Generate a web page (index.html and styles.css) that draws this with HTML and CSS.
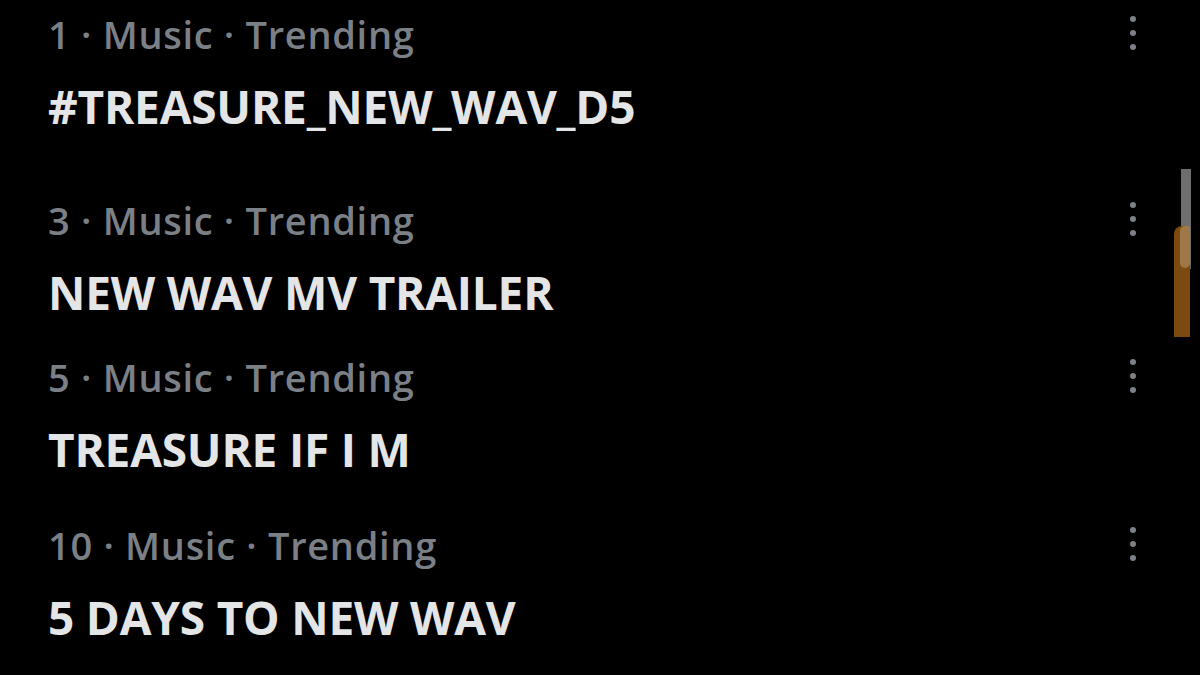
FILE: index.html
```html
<!DOCTYPE html>
<html>
<head>
<meta charset="utf-8">
<link rel="stylesheet" href="styles.css">
</head>
<body>
<div class="page">
  <ul class="trends">
    <li class="trend">
      <div class="trend-main">
        <div class="meta">1 · Music · Trending</div>
        <div class="title">#TREASURE_NEW_WAV_D5</div>
      </div>
      <button class="more" aria-label="More"><svg viewBox="0 0 6 34" width="6" height="34"><circle cx="3" cy="3" r="3"/><circle cx="3" cy="17" r="3"/><circle cx="3" cy="31" r="3"/></svg></button>
    </li>
    <li class="trend">
      <div class="trend-main">
        <div class="meta">3 · Music · Trending</div>
        <div class="title">NEW WAV MV TRAILER</div>
      </div>
      <button class="more" aria-label="More"><svg viewBox="0 0 6 34" width="6" height="34"><circle cx="3" cy="3" r="3"/><circle cx="3" cy="17" r="3"/><circle cx="3" cy="31" r="3"/></svg></button>
    </li>
    <li class="trend">
      <div class="trend-main">
        <div class="meta">5 · Music · Trending</div>
        <div class="title">TREASURE IF I M</div>
      </div>
      <button class="more" aria-label="More"><svg viewBox="0 0 6 34" width="6" height="34"><circle cx="3" cy="3" r="3"/><circle cx="3" cy="17" r="3"/><circle cx="3" cy="31" r="3"/></svg></button>
    </li>
    <li class="trend">
      <div class="trend-main">
        <div class="meta">10 · Music · Trending</div>
        <div class="title">5 DAYS TO NEW WAV</div>
      </div>
      <button class="more" aria-label="More"><svg viewBox="0 0 6 34" width="6" height="34"><circle cx="3" cy="3" r="3"/><circle cx="3" cy="17" r="3"/><circle cx="3" cy="31" r="3"/></svg></button>
    </li>
  </ul>
  <div class="scrollbar">
    <div class="scroll-track"></div>
    <div class="scroll-thumb"><div class="scroll-glint"></div></div>
  </div>
</div>
</body>
</html>
```
FILE: styles.css
```css
* { box-sizing: border-box; }
html, body {
  margin: 0;
  padding: 0;
  background: #000;
  width: 1200px;
  height: 675px;
  overflow: hidden;
}
.page {
  position: relative;
  width: 1200px;
  height: 675px;
  font-family: "Open Sans", "Liberation Sans", Arial, sans-serif;
}
.trends {
  list-style: none;
  margin: 0;
  padding: 16px 0 0 48px;
  width: 1144px;
}
.trend {
  display: flex;
  align-items: flex-start;
  justify-content: space-between;
}
.trend:nth-child(2) { margin-top: 70px; }
.trend:nth-child(3) { margin-top: 41px; }
.trend:nth-child(4) { margin-top: 52px; }
.trend-main {
  display: flex;
  flex-direction: column;
}
.meta {
  color: #7b8087;
  font-size: 38px;
  font-weight: 600;
  line-height: 36px;
  height: 40px;
  letter-spacing: 0.7px;
}
.title {
  color: #e4e5e6;
  font-size: 46px;
  font-weight: 700;
  line-height: 52px;
  margin-top: 24px;
  letter-spacing: -0.2px;
}
.more {
  background: none;
  border: 0;
  padding: 0;
  margin: 0;
  width: 22px;
  display: flex;
  justify-content: center;
  fill: #7c8187;
}
.scrollbar {
  position: absolute;
  left: 1174px;
  top: 169px;
  width: 17px;
  height: 168px;
}
.scroll-track {
  position: absolute;
  right: 0;
  top: 0;
  width: 10px;
  height: 100px;
  background: #6e6e6e;
}
.scroll-thumb {
  position: absolute;
  left: 0;
  bottom: 0;
  width: 16px;
  height: 111px;
  background: #7a4a10;
  border-top-left-radius: 8px;
}
.scroll-glint {
  position: absolute;
  right: 0;
  top: 0;
  width: 10px;
  height: 42px;
  background: #a07848;
  border-radius: 6px 0 6px 6px;
}
```
